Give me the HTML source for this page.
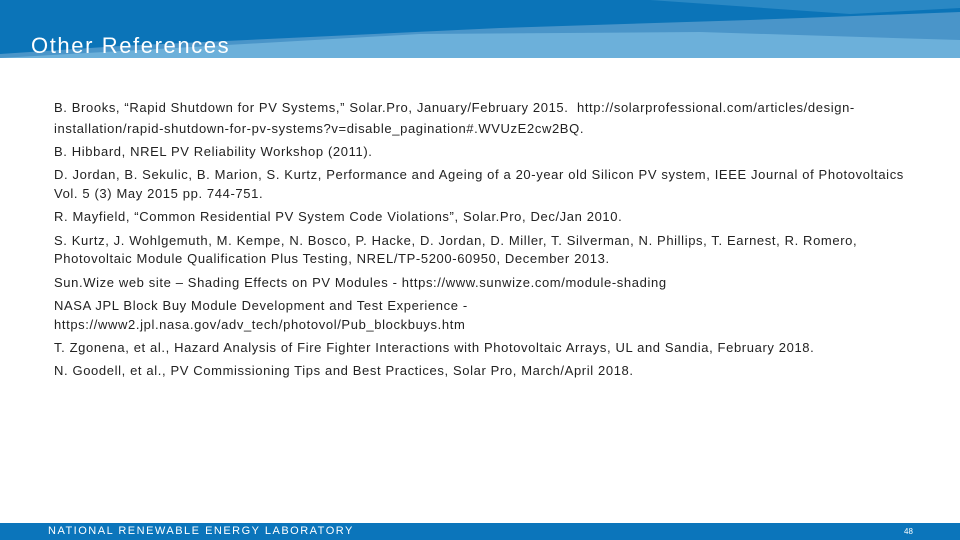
<!DOCTYPE html>
<html><head><meta charset="utf-8"><style>
body{margin:0;width:960px;height:540px;position:relative;overflow:hidden;background:#fff;font-family:"Liberation Sans",sans-serif}
.t{position:absolute;left:31px;top:33px;color:#fff;font-size:22px;letter-spacing:1.6px}
.l{position:absolute;left:54px;font-size:13px;letter-spacing:0.62px;color:#222;white-space:nowrap}
.f{position:absolute;left:0;top:523px;width:960px;height:17px;background:#0b75bb}
</style></head><body>
<svg width="960" height="58" style="position:absolute;left:0;top:0">
<rect width="960" height="58" fill="#6cb0da"/>
<polygon points="0,0 960,0 960,40 700,32 420,34 0,58" fill="#4a95c9"/>
<polygon points="0,0 960,0 960,12 750,20 500,28 120,46 0,54" fill="#0b74b8"/>
<polygon points="650,0 960,0 960,8 850,14" fill="#2a88c4"/>
</svg>
<div class="t">Other References</div>
<div class="l" style="top:100px">B. Brooks, “Rapid Shutdown for PV Systems,” Solar.Pro, January/February 2015.&nbsp; http://solarprofessional.com/articles/design-</div>
<div class="l" style="top:121px">installation/rapid-shutdown-for-pv-systems?v=disable_pagination#.WVUzE2cw2BQ.</div>
<div class="l" style="top:144px">B. Hibbard, NREL PV Reliability Workshop (2011).</div>
<div class="l" style="top:167px">D. Jordan, B. Sekulic, B. Marion, S. Kurtz, Performance and Ageing of a 20-year old Silicon PV system, IEEE Journal of Photovoltaics</div>
<div class="l" style="top:186px">Vol. 5 (3) May 2015 pp. 744-751.</div>
<div class="l" style="top:209px">R. Mayfield, “Common Residential PV System Code Violations”, Solar.Pro, Dec/Jan 2010.</div>
<div class="l" style="top:233px">S. Kurtz, J. Wohlgemuth, M. Kempe, N. Bosco, P. Hacke, D. Jordan, D. Miller, T. Silverman, N. Phillips, T. Earnest, R. Romero,</div>
<div class="l" style="top:251px">Photovoltaic Module Qualification Plus Testing, NREL/TP-5200-60950, December 2013.</div>
<div class="l" style="top:275px">Sun.Wize web site – Shading Effects on PV Modules - https://www.sunwize.com/module-shading</div>
<div class="l" style="top:298px">NASA JPL Block Buy Module Development and Test Experience -</div>
<div class="l" style="top:317px">https://www2.jpl.nasa.gov/adv_tech/photovol/Pub_blockbuys.htm</div>
<div class="l" style="top:340px">T. Zgonena, et al., Hazard Analysis of Fire Fighter Interactions with Photovoltaic Arrays, UL and Sandia, February 2018.</div>
<div class="l" style="top:363px">N. Goodell, et al., PV Commissioning Tips and Best Practices, Solar Pro, March/April 2018.</div>
<div class="f"><span style="position:absolute;left:48px;top:2px;color:#fff;font-size:11px;letter-spacing:1.5px">NATIONAL RENEWABLE ENERGY LABORATORY</span><span style="position:absolute;left:904px;top:4px;color:#fff;font-size:8px">48</span></div>
</body></html>
